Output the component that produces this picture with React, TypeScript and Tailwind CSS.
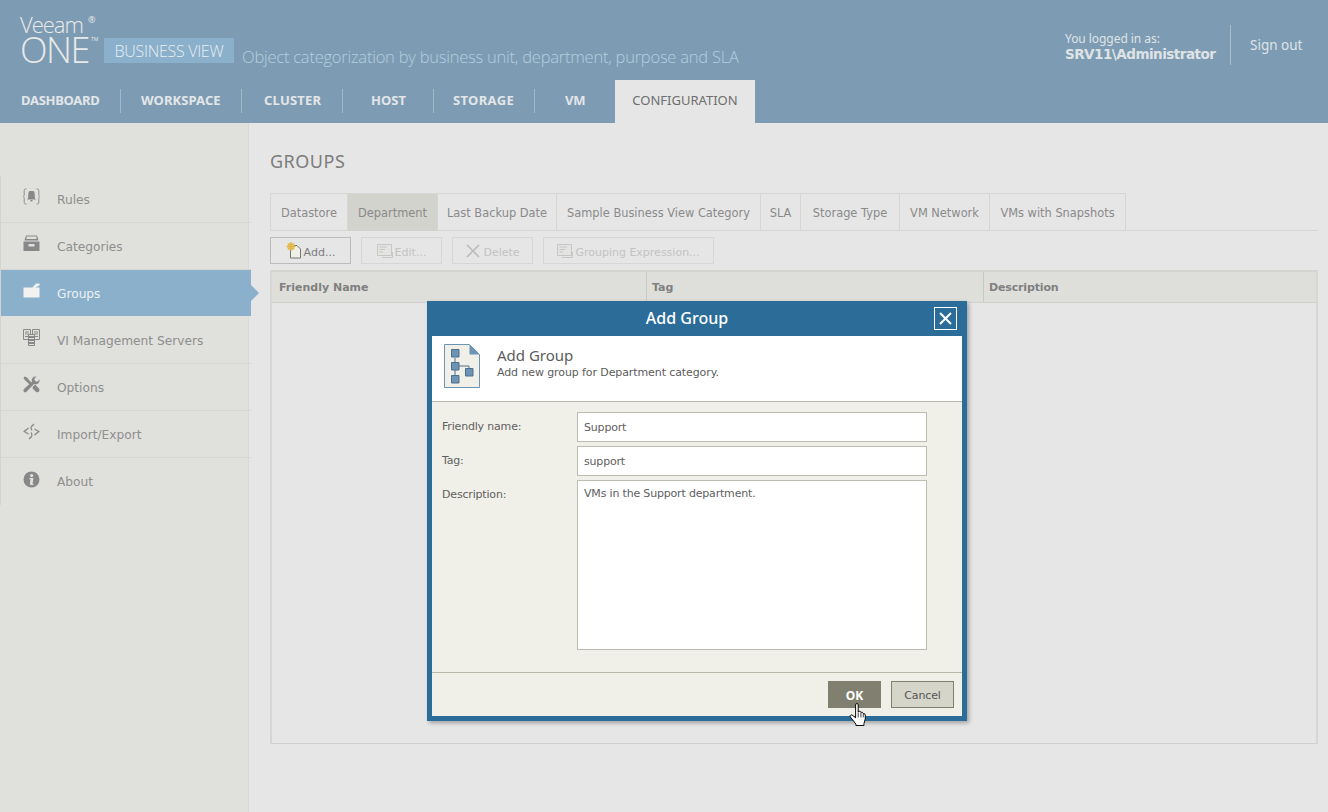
import React from "react";

const Sep = () => <div className="w-px h-[24px] bg-[#a3b9c9] shrink-0" />;

const navItems: [string, string][] = [
  ["DASHBOARD", "w-[121px] pl-[21px] tracking-[-0.3px]"],
  ["WORKSPACE", "w-[121px] pl-[20px] tracking-[0.1px]"],
  ["CLUSTER", "w-[101px] pl-[22px] tracking-[0.2px]"],
  ["HOST", "w-[91px] pl-[28px] tracking-[0px]"],
  ["STORAGE", "w-[101px] pl-[19px] tracking-[0.35px]"],
  ["VM", "w-[80px] pl-[30px] tracking-[-0.2px]"],
];

const icon = "w-[17px] h-[17px] fill-[#888888]";

const RulesIcon = () => (
  <svg viewBox="0 0 17 17" className={icon}>
    <path d="M3.5 1H2.5Q1.2 1 1.2 2.5V6.5Q1.2 8 .3 8.5 1.2 9 1.2 10.5V14.5Q1.2 16 2.5 16H3.5M13.5 1H14.5Q15.8 1 15.8 2.5V6.5Q15.8 8 16.7 8.5 15.8 9 15.8 10.5V14.5Q15.8 16 14.5 16H13.5" fill="none" stroke="#8f8f8f" strokeWidth="1" />
    <path d="M5 10.5 5.5 4.5Q5.7 3 7 3H10Q11.3 3 11.5 4.5L12 10.5 13 11.5H4Z M7.5 12H9.5V13.5H7.5Z" />
  </svg>
);
const CategoriesIcon = () => (
  <svg viewBox="0 0 17 17" className={icon}>
    <path fillRule="evenodd" d="M3 .5H14V1.5H3Z M2.5 1.5H3.5L3.5 4H13.5L13.5 1.5H14.5L15.5 5.5H1.5Z M.5 6.5H16.5V16H.5Z M5.5 9V11.5H11.5V9Z" />
  </svg>
);
const FolderIcon = () => (
  <svg viewBox="0 0 17 17" className="w-[17px] h-[17px] fill-[#f2f3f0]">
    <path d="M.5 5.5H9.5L13 1.5H16.5V3.5L12 5.5H16.5V15.5H.5Z" />
  </svg>
);
const ServersIcon = () => (
  <svg viewBox="0 0 17 17" className="w-[17px] h-[17px]" fill="none" stroke="#888888" strokeWidth="1">
    <path d="M.5.5H7.5V10.5H.5ZM2 3H6M2 5H6M2 7.5H6M9.5.5H16.5V10.5H9.5ZM11 3H15M11 5H15M11 7.5H15" />
    <path d="M5.5 5.5H11.5V16.5H5.5Z" fill="#e0e1dc" />
    <path d="M6 8H11M6 11H11M6 14H11" strokeWidth="1.8" />
  </svg>
);
const OptionsIcon = () => (
  <svg viewBox="0 0 17 17" className={icon}>
    <path d="M1.5.5 4 1.5 6 4 9.5 7.5 7.5 9.5 4 6 2 4.2.5 2Z" />
    <path d="M16.5 3.5A4 4 0 0 1 11 8L3.5 15.8Q2.2 17 1 15.8T1 13L9 5.8A4 4 0 0 1 13.5.5L11.3 2.8 12 5 14.2 5.7Z" />
    <path d="M10 10.5 12 8.5 16 12.5Q17 14 16 15.5T12.8 15.8L9.5 12.3Z" />
  </svg>
);
const ImportIcon = () => (
  <svg viewBox="0 0 17 17" className="w-[17px] h-[17px]" fill="none" stroke="#888888" strokeWidth="1.3">
    <path d="M5.5 5 1.2 8.5 5.5 11M11.5 6 15.8 8.5 11.5 12" />
    <path d="M11 1 8.5 3.5Q7.5 5 8.5 6.5L9 7.5M8 9.5 8.5 10.5Q9.5 12 8.5 13.5L6 16" />
  </svg>
);
const InfoIcon = () => (
  <svg viewBox="0 0 17 17" className={icon}>
    <path fillRule="evenodd" d="M8.5.5a8 8 0 1 1 0 16 8 8 0 0 1 0-16ZM7.8 3.2a1.6 1.6 0 1 0 2.4 1.8 1.6 1.6 0 0 0-2.4-1.8ZM6.5 7V8.2H7.5L6.9 12.4Q6.7 13.9 8.2 14H10.5V12.9H9.6L10.4 7Z" />
  </svg>
);

const sideItems: [string, React.ReactNode, boolean, boolean][] = [
  ["Rules", <RulesIcon />, false, true],
  ["Categories", <CategoriesIcon />, false, true],
  ["Groups", <FolderIcon />, true, true],
  ["VI Management Servers", <ServersIcon />, false, true],
  ["Options", <OptionsIcon />, false, true],
  ["Import/Export", <ImportIcon />, false, true],
  ["About", <InfoIcon />, false, false],
];

const tabs: [string, string][] = [
  ["Datastore", "w-[77px]"],
  ["Department", "w-[90px]"],
  ["Last Backup Date", "w-[119px]"],
  ["Sample Business View Category", "w-[204px]"],
  ["SLA", "w-[40px]"],
  ["Storage Type", "w-[99px]"],
  ["VM Network", "w-[90px]"],
  ["VMs with Snapshots", "w-[136px]"],
];

const DocIcon = () => (
  <svg viewBox="0 0 16 16" className="w-[16px] h-[16px] shrink-0">
    <path d="M.5 1.5H14.5V12.5H.5Z" fill="#e4e4e2" stroke="#c6c7c4" />
    <path d="M2.5 4H10M2.5 6.5H8M2.5 9H6" stroke="#c6c7c4" />
    <path d="M5 14.5H15.5V9" fill="none" stroke="#c6c7c4" />
  </svg>
);

const AddIcon = () => (
  <svg viewBox="0 0 16 17" className="w-[16px] h-[17px] shrink-0">
    <path d="M4.5 3.5H11L14.5 7V16H4.5Z" fill="#f0f0e8" stroke="#77776f" />
    <circle cx="5" cy="4.5" r="3.8" fill="#e8c25a" />
    <circle cx="5" cy="4.5" r="1.8" fill="#f3e3a0" />
    <path d="M5 0V9M.5 4.5H9.5M2 1.5 8 7.5M8 1.5 2 7.5" stroke="#d8a83a" strokeWidth=".7" />
  </svg>
);

const ToolButton = ({ w, icon: ic, label, on }: { w: string; icon: React.ReactNode; label: string; on?: boolean }) => (
  <div className={`${w} h-[27px] flex items-center justify-center gap-[2px] border ${on ? "border-[#bcbdba] text-[#7c7c7c]" : "border-[#d6d7d4] text-[#c2c3c1]"} text-[11px]`}>
    {ic}
    <span className="pt-[6px]">{label}</span>
  </div>
);

const HandCursor = () => (
  <svg viewBox="0 0 18 24" className="absolute left-[849px] top-[703px] w-[18px] h-[23px]">
    <path d="M6.5 2Q6.5.5 7.8.5T9.2 2V9.5L9.8 8.5Q11.2 8 11.8 9.5L12.2 9.7Q13.8 9.2 14.2 10.7L14.6 11Q16.5 10.8 16.6 12.6V16.5L15.2 21.5V23.5H6.8V22L1 14.5Q.3 13 1.6 12.4 2.8 12.2 3.8 13.2L6.5 15.5Z" fill="#ffffff" stroke="#000000" strokeWidth="1" />
    <path d="M9.2 10V15M12 10V15M14.5 11V15" stroke="#000000" strokeWidth=".8" />
  </svg>
);

export default function App() {
  return (
    <div className="relative w-[1328px] h-[812px] overflow-hidden bg-[#e6e6e6] font-['DejaVu_Sans','Noto_Sans',sans-serif]">
      <header className="h-[123px] bg-[#7d9cb3] flex flex-col relative">
        <div className="h-[80px] flex justify-between">
          <div className="flex items-start pl-[20px] pt-[11px]">
            <div className="relative w-[84px] text-[#e9eaea] font-['Open_Sans',sans-serif] font-light">
              <div className="text-[22px] leading-[26px] tracking-[-1px]">Veeam</div>
              <div className="text-[36px] leading-[27px] -mt-[1px] tracking-[-1.5px]">ONE</div>
              <span className="absolute left-[68px] top-[3px] text-[9px] leading-[12px] font-normal">®</span>
              <span className="absolute left-[71px] top-[25px] text-[5px] leading-[6px] font-normal">TM</span>
            </div>
            <div className="mt-[27px] w-[130px] h-[25px] bg-[#8ab0cb] text-[#e9eef2] text-[16px] leading-[26px] text-center font-['Open_Sans',sans-serif] font-light tracking-[-0.3px] whitespace-nowrap">BUSINESS VIEW</div>
            <div className="ml-[8px] mt-[34px] text-[#b5cee0] text-[16.5px] leading-[24px] font-['Open_Sans',sans-serif] font-light tracking-[-0.23px] whitespace-nowrap">Object categorization by business unit, department, purpose and SLA</div>
          </div>
          <div className="flex items-start pt-[25px]">
            <div className="w-[165px] pt-[6px] text-[#dfe3e6] leading-[15px]">
              <div className="text-[12px] tracking-[-0.05px] font-['Noto_Sans',sans-serif] whitespace-nowrap">You logged in as:</div>
              <div className="text-[13.5px] pt-[1px] font-bold tracking-[-0.5px] whitespace-nowrap font-['DejaVu_Sans',sans-serif]">SRV11\Administrator</div>
            </div>
            <div className="w-px h-[40px] bg-[#a9becd]" />
            <div className="w-[97px] pl-[19px] pt-[11px] text-[#dfe3e6] text-[13.5px] leading-[18px] font-['Noto_Sans',sans-serif] whitespace-nowrap">Sign out</div>
          </div>
        </div>
        <nav className="h-[43px] flex items-start">
          {navItems.map(([label, cls], i) => (
            <div key={label} className={`${cls} h-[42px] flex items-center justify-between shrink-0`}>
              <span className="text-[#e3e6e8] text-[13px] font-bold font-['Noto_Sans',sans-serif]">{label}</span>
              {i < 5 && <Sep />}
            </div>
          ))}
          <div className="w-[140px] h-[43px] bg-[#e6e6e6] text-[#6e6e6e] text-[13px] leading-[40px] text-center font-['Noto_Sans',sans-serif]">CONFIGURATION</div>
        </nav>
      </header>

      <div className="flex h-[689px]">
        <aside className="w-[249px] bg-[#e0e1dc] border-r border-[#d9d9d5] pt-[53px] shrink-0">
          <div className="border-l border-[#d3d4d0]">
            {sideItems.map(([label, ic, active, line]) => (
              <div key={label} className={`relative w-[250px] h-[47px] flex items-center pt-[2px] ${active ? "bg-[#8ab0cb] text-[#eef2f4]" : "text-[#8e8e8e]"} ${line ? "border-b" : ""} ${active ? "border-[#e0e1dc]" : "border-[#d6d7d3]"}`}>
                <div className="w-[22px] shrink-0" />
                <div className="w-[17px] h-[17px] shrink-0 -mt-[7px]">{ic}</div>
                <span className="ml-[17px] text-[12.2px] font-['DejaVu_Sans',sans-serif]">{label}</span>
                {active && <div className="absolute left-[250px] top-[15px] w-0 h-0 border-y-[8px] border-y-transparent border-l-[8px] border-l-[#8ab0cb]" />}
              </div>
            ))}
          </div>
        </aside>

        <main className="flex-1 pl-[21px] pr-[10px] pt-[27px] flex flex-col">
          <h1 className="text-[18px] leading-[22px] tracking-[0.5px] text-[#7c7c7c] font-normal font-['Noto_Sans',sans-serif]">GROUPS</h1>
          <div className="mt-[21px] h-[38px] flex border-b border-[#d6d7d4]">
            <div className="flex border-t border-l border-[#d6d7d4]">
              {tabs.map(([t, w]) => (
                <div key={t} className={`${w} h-[37px] flex items-center justify-center pt-[2px] border-r border-[#d6d7d4] text-[11.4px] text-[#8a8a8a] font-['DejaVu_Sans',sans-serif] whitespace-nowrap ${t === "Department" ? "bg-[#d2d3cc]" : ""}`}>{t}</div>
              ))}
            </div>
          </div>
          <div className="mt-[6px] flex gap-[10px]">
            <ToolButton w="w-[81px]" icon={<AddIcon />} label="Add..." on />
            <ToolButton w="w-[81px]" icon={<DocIcon />} label="Edit..." />
            <ToolButton w="w-[81px]" icon={<svg viewBox="0 0 16 16" className="w-[16px] h-[16px] shrink-0"><path d="M2 2 14 14M14 2 2 14" stroke="#bbbcba" strokeWidth="1.6" /></svg>} label="Delete" />
            <ToolButton w="w-[171px]" icon={<DocIcon />} label="Grouping Expression..." />
          </div>
          <div className="mt-[6px] h-[474px] border-2 border-t-0 border-[#d6d7d2] border-b border-b-[#cfd0cc]">
            <div className="h-[33px] flex items-center bg-[#dedfda] border-b border-t-2 border-[#d0d1cc] border-t-[#d4d4d1] text-[11px] font-bold text-[#808080] font-['DejaVu_Sans',sans-serif]">
              <div className="w-[375px] pl-[7px] pt-[2px] h-full flex items-center border-r border-[#c8c9c4]">Friendly Name</div>
              <div className="w-[337px] pl-[5px] pt-[2px] h-full flex items-center border-r border-[#c8c9c4]">Tag</div>
              <div className="pl-[5px] pt-[2px] tracking-[-0.15px]">Description</div>
            </div>
          </div>
        </main>
      </div>

      <div className="absolute left-[427px] top-[301px] w-[540px] h-[420px] border-[5px] border-[#2b6c99] bg-[#f0f0e8] shadow-[2px_2px_4px_rgba(0,0,0,0.3)] flex flex-col font-['DejaVu_Sans',sans-serif]">
        <div className="h-[30px] shrink-0 bg-[#2b6c99] relative flex items-center justify-center pr-[20px] text-white text-[16px] font-['Noto_Sans',sans-serif] font-medium">
          <span className="-mt-[7px]">Add Group</span>
          <div className="absolute left-[502px] top-[1px] w-[23px] h-[23px] border border-white flex items-center justify-center">
            <svg viewBox="0 0 13 13" className="w-[13px] h-[13px]"><path d="M1 1 12 12M12 1 1 12" stroke="#ffffff" strokeWidth="2" /></svg>
          </div>
        </div>
        <div className="h-[66px] shrink-0 bg-white border-b border-[#b8b7aa] flex items-start pl-[12px] pt-[8px]">
          <svg viewBox="0 0 36 44" className="w-[36px] h-[44px] shrink-0">
            <path d="M.5.5H25.5L35.5 10.5V43.5H.5Z" fill="#f0f0e8" stroke="#6d94b3" />
            <path d="M25.5.5 35.5 10.5H25.5Z" fill="#6d94b3" />
            <path d="M11 14V38M11 22H25V27" fill="none" stroke="#4c6f8d" />
            <path d="M7.5 5.5H15V13H7.5ZM7.5 18.5H15V26H7.5ZM7.5 31.5H15V39H7.5ZM21.5 24.5H29V32H21.5Z" fill="#6d94b3" stroke="#4c6f8d" />
          </svg>
          <div className="ml-[17px] pt-[2px] text-[#5c5c5c]">
            <div className="text-[15px] leading-[19px] font-['Noto_Sans',sans-serif]">Add Group</div>
            <div className="text-[11px] leading-[14px] pt-[1px] tracking-[-0.1px] whitespace-nowrap">Add new group for Department category.</div>
          </div>
        </div>
        <div className="flex-1 flex flex-col gap-[4px] pt-[10px] pl-[10px] text-[11px] text-[#606060] tracking-[-0.18px]">
          <div className="flex h-[30px]">
            <div className="w-[135px] pt-[7px] leading-[15px]">Friendly name:</div>
            <div className="w-[350px] border border-[#bdbcb0] bg-white pl-[6px] pt-[2px] flex items-center">Support</div>
          </div>
          <div className="flex h-[30px]">
            <div className="w-[135px] pt-[7px] leading-[15px]">Tag:</div>
            <div className="w-[350px] border border-[#bdbcb0] bg-white pl-[6px] pt-[2px] flex items-center">support</div>
          </div>
          <div className="flex h-[170px]">
            <div className="w-[135px] pt-[7px] leading-[15px]">Description:</div>
            <div className="w-[350px] border border-[#bdbcb0] bg-white pl-[6px] pt-[5px] leading-[15px]">VMs in the Support department.</div>
          </div>
        </div>
        <div className="h-[44px] shrink-0 border-t border-[#b8b7aa] flex justify-end items-start gap-[10px] pt-[8px] pr-[8px] text-[11px] tracking-[-0.1px]">
          <div className="w-[53px] h-[27px] pt-[2px] bg-[#807f70] text-white text-[12px] font-bold font-['Noto_Sans',sans-serif] flex items-center justify-center">OK</div>
          <div className="w-[63px] h-[27px] pt-[3px] bg-[#d5d5c9] border border-[#807f70] text-[#555555] flex items-center justify-center">Cancel</div>
        </div>
      </div>
      <HandCursor />
    </div>
  );
}
